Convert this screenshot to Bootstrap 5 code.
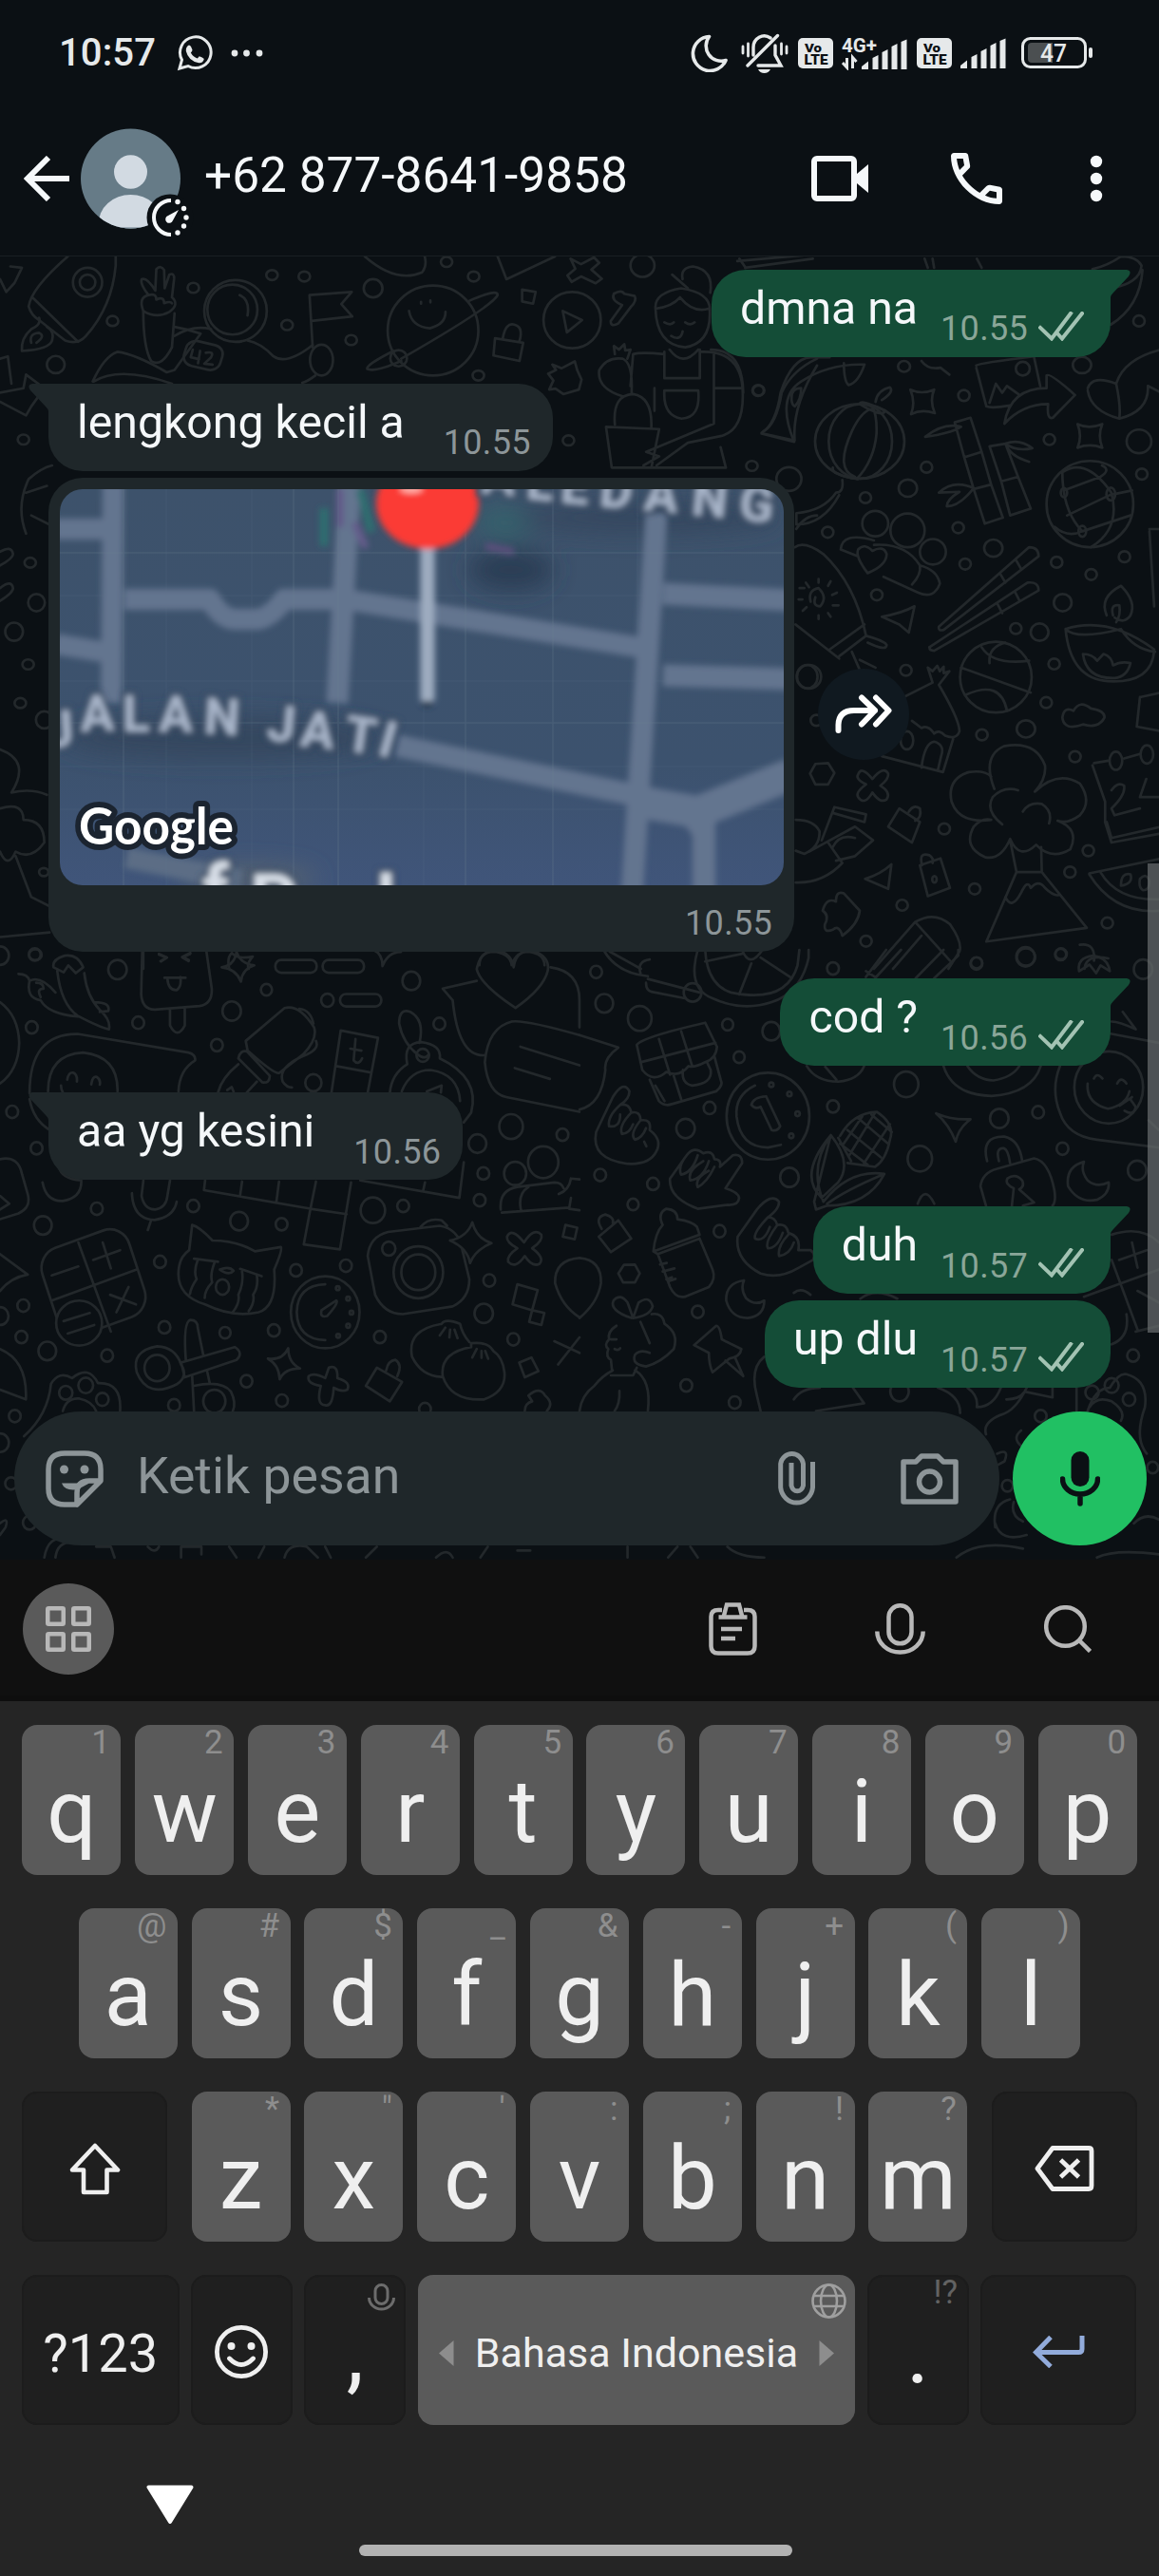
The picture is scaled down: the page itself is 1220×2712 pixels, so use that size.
<!DOCTYPE html>
<html lang="id">
<head>
<meta charset="utf-8">
<meta name="viewport" content="width=device-width, initial-scale=1">
<title>+62 877-8641-9858</title>
<link href="https://cdn.jsdelivr.net/npm/bootstrap@5.3.0/dist/css/bootstrap.min.css" rel="stylesheet">
<style>
  body { font-family: Roboto, "Noto Sans", sans-serif; background: #252525; color: #f5f8fa; }
  .phone { width: 1220px; height: 2712px; overflow: hidden; }
  svg { display: block; flex: none; }
  .topbars { background: #0b1014; }
  .statusbar { height: 112px; padding: 0 70px 0 62px; color: #e6e9ea; }
  .clock { font-size: 40px; font-weight: 500; line-height: 50px; letter-spacing: .1px; }
  .chathead { height: 158px; padding: 0 59px 6px 25px; border-bottom: 1px solid #191f23; }
  .peer { font-size: 51.4px; line-height: 60px; margin-left: 18px; padding-bottom: 5px; }
  .chatarea { height: 1372px; background: #0b1014; overflow: hidden; }
  .doodles { inset: 0; fill: none; stroke: #23282b; stroke-width: 2.7; stroke-linecap: round; stroke-linejoin: round; }
  .doodles path, .doodles circle, .doodles ellipse, .doodles rect { vector-effect: non-scaling-stroke; }
  .msgs { padding: 13.5px 51px 0; }
  .bubble { height: 92px; border-radius: 36px; padding-left: 30px; line-height: 82.500px; font-size: 48.2px; white-space: nowrap; }
  .bubble-out { background: #144d37; padding-right: 28px; }
  .bubble-in { background: #1f272a; padding-right: 23px; }
  .gap-l { margin-top: 28px; }
  .gap-m { margin-top: 28.5px; }
  .gap-s { margin-top: 7px; }
  .tail-out { border-top-right-radius: 0; }
  .tail-in { border-top-left-radius: 0; }
  .tail-out > .tail { left: 100%; top: 0; margin-left: -1px; fill: #144d37; }
  .tail-in > .tail { right: 100%; top: 0; margin-right: -1px; fill: #1f272a; }
  .stamp { font-size: 36px; line-height: 44px; margin-bottom: 7.5px; letter-spacing: .3px; color: #8d9699; }
  .bubble-out .stamp { color: #8aa698; margin-left: 24px; }
  .bubble-in .stamp { margin-left: 41px; }
  .ticks { margin: 0 0 17px 11px; }
  .mapcard { width: 785px; height: 499px; border-radius: 36px; background: #1f272a; padding: 12px 11px 0 12px; }
  .mapimg { height: 417px; border-radius: 24px; overflow: hidden; }
  .mapcard .stamp { margin: 18px 12px 0 0; }
  .fwd { width: 96px; height: 96px; margin-left: 25px; background: #101920; }
  .scroller { width: 12px; right: 0; top: 639px; height: 494px; background: rgba(105,109,111,.7); }
  .composer { padding: 0 13px 15px 15px; }
  .field { width: 1037px; height: 141px; border-radius: 71px; background: #1f272a; padding: 0 43px 0 33px; color: #8d9598; }
  .hint { font-size: 53.6px; line-height: 60px; padding-bottom: 5px; margin-left: 35px; }
  .sendmic { width: 141px; height: 141px; background: #21c063; margin-left: 14px; }
  .kbbar { height: 149px; background: #101010; padding: 2px 71px 0 24px; border-bottom: 6px solid #0e0e0e; }
  .kbapps { width: 96px; height: 96px; background: #5a5a5a; }
  .keyboard { background: #252525; padding: 25px 23px 0 23px; height: 921px; }
  .krow { height: 158px; margin-bottom: 35px; gap: 14.8px; }
  .key { position: relative; flex: none; width: 104px; height: 158px; border-radius: 16px; background: #5a5a5a; color: #efefef; font-size: 92px; line-height: 183px; text-align: center; white-space: nowrap; }
  .key .alt { position: absolute; top: 0; right: 11.5px; font-size: 35px; line-height: 38px; color: #8e8e8e; }
  .krow .faint { font-weight: 300; }
  .dim { background: #1f1f1f; box-shadow: inset 0 0 0 2px #1c1c1c; }
  .dim .alt { color: #626262; }
  .wide-mod { width: 153px; }
  .key-gap { gap: 14.8px; }
  .mod-row { gap: 12.4px; }
  .sym { width: 165.5px; font-size: 56px; line-height: 166px; }
  .slim { width: 107px; line-height: 163px; }
  .enterkey { width: 164.5px; }
  .space { width: 460.5px; font-size: 43px; line-height: 164px; }
  .navstrip { padding-left: 131px; margin-top: 63px; }
  .homebar { width: 456px; height: 11.5px; border-radius: 6px; background: #b2b2b2; margin: 21px 0 0 355px; }
</style>
</head>
<body>
<svg class="d-none" aria-hidden="true">
  <symbol id="tk" viewBox="0 0 48 31"><path d="M2 17 L14 28.500 L34 2 M20 23 L25 28.500 L46 2" fill="none" stroke="#a3c3b3" stroke-width="4" stroke-linecap="square"/></symbol>
  <symbol id="bars" viewBox="0 0 48 32"><path fill="#e6e9ea" d="M0 29 L7 23.500 V32 H0Z M11.500 20 L17.500 17 V32 H11.500Z M21.500 14 L27.500 11 V32 H21.500Z M31.500 8 L37.500 5 V32 H31.500Z M41.500 3 L47.500 .5 V32 H41.500Z"/></symbol>
</svg>

<main class="phone d-flex flex-column mx-auto">
  <header class="topbars">
    <div class="statusbar d-flex align-items-center">
      <span class="clock">10:57</span>
      <svg style="margin-left:22px" width="38" height="38" viewBox="0 0 38 38" fill="none" stroke="#e6e9ea" stroke-width="3"><path d="M3 35 L5.500 26 A16.300 16.300 0 1 1 12 32.500 Z"/><path d="M11 12 q2-3 4 0 l1.500 3.500 q0 1.500-1.700 3 q2.500 4.500 7 6 l2-2.300 q3.500 1 5 2.800 q-1 4.500-5.500 4.200 q-11-2-13.500-12.500 q-.3-3 1.200-4.700Z" fill="#e6e9ea" stroke="none"/></svg>
      <svg style="margin-left:18px" width="36" height="10" viewBox="0 0 36 10" fill="#e6e9ea"><circle cx="5" cy="5" r="3.400"/><circle cx="17.500" cy="5" r="3.400"/><circle cx="31" cy="5" r="3.400"/></svg>

      <svg class="ms-auto" width="39" height="40" viewBox="0 0 39 40" fill="none" stroke="#e6e9ea" stroke-width="3.600" stroke-linejoin="round"><path d="M19.500 2.500 A18 18 0 1 0 37 27.500 A16 16 0 0 1 19.500 2.500Z"/></svg>
      <svg style="margin-left:14px" width="50" height="42" viewBox="0 0 50 42" fill="none" stroke="#e6e9ea" stroke-width="3.400" stroke-linecap="round"><path d="M38.500 2.500 L7 34 M13 23 V15 A11.500 12 0 0 1 31 5 M36 13 V23 L42 34 H18"/><path d="M2 14 V21 M7.500 11 V24 M48 14 V21 M42.500 11 V22" stroke-width="2.800"/><path d="M18 38 H31 Q29 42 24.500 42 Q20 42 18 38Z" fill="#e6e9ea" stroke="none"/></svg>
      <svg style="margin-left:10px" width="37" height="32" viewBox="0 0 37 32"><rect width="37" height="32" rx="5" fill="#e6e9ea"/><text x="7" y="14.500" font-size="13.500" font-weight="900" fill="#0b1014" textLength="18" lengthAdjust="spacingAndGlyphs">Vo</text><text x="6.500" y="28" font-size="15" font-weight="900" fill="#0b1014" textLength="25" lengthAdjust="spacingAndGlyphs">LTE</text></svg>
      <svg style="margin-left:9px" width="69" height="36" viewBox="0 0 69 36"><text x="0" y="16.500" font-size="20" font-weight="700" fill="#e6e9ea" textLength="37" lengthAdjust="spacingAndGlyphs">4G+</text><path d="M1 28 L5.500 33 V23 M15.500 27 L11.500 22.500 V34" fill="none" stroke="#e6e9ea" stroke-width="3"/><svg x="21" y="3" width="48" height="32"><use href="#bars"/></svg></svg>
      <svg style="margin-left:10px" width="37" height="32" viewBox="0 0 37 32"><rect width="37" height="32" rx="5" fill="#e6e9ea"/><text x="7" y="14.500" font-size="13.500" font-weight="900" fill="#0b1014" textLength="18" lengthAdjust="spacingAndGlyphs">Vo</text><text x="6.500" y="28" font-size="15" font-weight="900" fill="#0b1014" textLength="25" lengthAdjust="spacingAndGlyphs">LTE</text></svg>
      <svg style="margin-left:9px" width="48" height="32"><use href="#bars"/></svg>
      <svg style="margin-left:16px" width="75" height="34" viewBox="0 0 75 34"><rect x="1.500" y="1.500" width="66" height="30" rx="8" fill="none" stroke="#e6e9ea" stroke-width="3"/><path d="M11 6 H33 V27 H11 Q7 27 7 23 V10 Q7 6 11 6Z" fill="#4b4f51"/><rect x="71" y="11" width="4" height="11" rx="2" fill="#e6e9ea"/><text x="20" y="25.500" font-size="26" font-weight="500" fill="#e6e9ea" textLength="28" lengthAdjust="spacingAndGlyphs">47</text></svg>
    </div>

    <div class="chathead d-flex align-items-center">
      <svg width="49" height="48" viewBox="0 0 49 48" fill="none" stroke="#f5f8fa" stroke-width="6"><path d="M48 24 H4 M26 2 L4 24 L26 46"/></svg>
      <svg style="margin:0 -7px 0 11px" width="119" height="122" viewBox="0 -3 119 122"><defs><clipPath id="av"><circle cx="52.500" cy="58" r="52.500"/></clipPath></defs><g clip-path="url(#av)"><rect width="106" height="120" fill="#667b87"/><ellipse cx="52.500" cy="51" rx="17.500" ry="17.800" fill="#d2dae2"/><ellipse cx="52.500" cy="106" rx="34" ry="31" fill="#d2dae2"/><path d="M0 109.500 H106 V120 H0Z" fill="#667b87"/></g><circle cx="94" cy="99" r="24.500" fill="#0b1014"/><path d="M95 81 A18 18 0 1 0 95 117" fill="none" stroke="#f5f8fa" stroke-width="4"/><path d="M103 91 L97 102 A4 4 0 1 1 92 97Z" fill="#f5f8fa"/><g fill="#f5f8fa"><circle cx="102" cy="82.500" r="2.700"/><circle cx="108.500" cy="89.500" r="2.700"/><circle cx="111" cy="99" r="2.700"/><circle cx="108.500" cy="108" r="2.700"/><circle cx="102" cy="115" r="2.700"/></g></svg>
      <span class="peer">+62 877-8641-9858</span>
      <svg class="ms-auto" width="61" height="48" viewBox="0 0 61 48"><rect x="3" y="3" width="42" height="42" rx="3" fill="none" stroke="#f5f8fa" stroke-width="6"/><path d="M48 19 L60 9 V39 L48 29Z" fill="#f5f8fa"/></svg>
      <svg style="margin-left:86px" width="54" height="54" viewBox="3 3 18 18" fill="#f5f8fa"><path d="M19.950 21q-3.125 0-6.175-1.363T8.225 15.775t-3.862-5.550T3 4.050q0-.45.3-.75t.75-.3H8.100q.35 0 .625.238t.325.562l.65 3.500q.05.4-.025.675T9.400 8.450L6.975 10.900q.5.925 1.187 1.787t1.513 1.663q.775.775 1.625 1.438T13.100 17l2.350-2.350q.225-.225.588-.338t.712-.062l3.450.7q.35.100.575.363T21 15.900v4.050q0 .45-.3.750t-.75.300ZM6.025 9l1.650-1.650L7.250 5H5.025q.125 1.025.35 2.025T6.025 9Zm8.950 8.950q.975.425 1.988.675T19 18.950v-2.200l-2.350-.475-1.675 1.675Z"/></svg>
      <svg style="margin-left:92px" width="14" height="50" viewBox="0 0 14 50" fill="#f5f8fa"><circle cx="7" cy="7" r="6.200"/><circle cx="7" cy="25" r="6.200"/><circle cx="7" cy="43" r="6.200"/></svg>
    </div>
  </header>

  <section class="chatarea position-relative d-flex flex-column">
    <svg class="doodles position-absolute" width="1220" height="1372" viewBox="0 270 1220 1372">
      <g transform="translate(0 270) scale(.5485 .4783)">
        <path d="M0 50 L12 78 L28 58 L42 25 L20 22 M130 0 Q60 70 55 110 Q60 130 75 140 L125 185 Q150 195 165 175 Q215 110 222 20 V0 M62 90 L150 188"/><ellipse cx="168" cy="57" rx="28" ry="32"/><ellipse cx="168" cy="57" rx="15" ry="17"/>
        <path d="M75 135 Q80 150 60 160 Q40 180 42 208 Q95 205 100 185 Q105 165 90 155 M60 190 Q55 170 75 168 Q88 175 70 190"/>
        <path d="M275 120 Q265 90 285 85 Q268 60 272 50 Q282 45 298 75 L300 28 Q308 18 315 30 L316 70 L325 40 Q335 35 334 50 L330 90 Q345 105 325 122 Q300 138 275 120 Q275 200 290 230 Q310 245 330 200 L335 125 M285 85 q15-5 15 10 q15-8 15 8 q12-5 15 0"/>
        <ellipse cx="452" cy="120" rx="60" ry="68"/><ellipse cx="446" cy="117" rx="48" ry="55"/><path d="M460 85 Q480 95 475 130 M335 155 Q360 160 385 170 L335 250 L320 255 Q260 215 225 210 Q200 220 178 275 M335 175 Q370 150 405 160 M475 185 Q500 190 525 220 Q550 240 600 195 M180 275 Q230 240 330 280"/>
        <rect x="-36" y="-28" width="72" height="56" rx="20" transform="translate(390 218) rotate(15)"/><path d="M370 205 L366 222 L382 226 M384 208 L380 235 M395 212 Q412 208 405 222 L392 236 L408 238"/>
        <path d="M600 200 L594 85 L675 78 L655 105 L676 132 L598 142"/><ellipse cx="617" cy="228" rx="22" ry="34"/><path d="M605 262 Q590 275 580 278"/>
        <ellipse cx="831" cy="163" rx="87" ry="99"/><path d="M900 98 Q955 70 955 85 Q945 110 770 225 M755 208 Q700 240 705 248 Q720 255 770 230 M785 120 Q790 155 825 158 Q855 150 855 122 M808 100 v4 M826 97 v4"/><ellipse cx="765" cy="224" rx="16" ry="18"/>
        <ellipse cx="1098" cy="140" rx="55" ry="62"/><path d="M1080 120 L1117 140 L1088 167Z M1002 73 l26 5 l-5 26 l-21 -5z M950 180 l54 10 l-7 40 l-50-12z M965 180 q5-35 22-30 q18 5 10 36 M1178 82 q15-10 20 0 l20 5 q5 10-8 25 l-23 35 q-15 10-15-5 l22-35 q-22-10-16-25"/>
        <path d="M700 0 Q760 60 810 35 Q820 20 815 0 M955 0 L972 50 L1065 0 M1095 5 l20 12 l25 -15 l10 12 l-15 15 l20 20 l-12 10 l-28-15 l-18 12 l-8-14 l15-15z M1415 10 L1565 -5 M1430 25 L1560 5 M1290 40 L1320 70"/>
        <path d="M1258 115 Q1255 80 1307 70 Q1365 80 1362 120 Q1365 190 1315 200 Q1260 195 1258 115 Q1290 110 1305 90 Q1330 125 1360 115 M1275 145 q12 8 18 0 M1315 145 q10 8 18 0 M1288 175 q18 12 22-10 M1285 205 Q1310 245 1340 205 M1275 210 V268 H1343 V205 M1275 215 Q1230 210 1215 215 L1210 285 M1343 210 Q1420 205 1425 290 H1370 M1256 290 V340 M1370 215 V368 L1240 430 L1265 440 L1235 460 M1425 290 Q1430 380 1385 395 L1320 410 L1260 460 M1175 465 H1393 L1383 420 M1275 295 H1340 Q1345 355 1308 357 Q1272 350 1275 295 M1163 375 L1265 380 L1250 465 H1174Z M1180 370 Q1175 305 1215 303 Q1252 310 1250 375 M1195 308 Q1145 290 1150 250 Q1165 220 1195 225 Q1215 235 1212 300 M1180 215 l-2-18 l10 8 l10-12 l2 14 l10-2 l-6 20"/><path d="M1310 50 Q1305 25 1330 22 Q1370 30 1363 80"/>
        <path d="M1060 238 l18 8 l25-15 l5 20 l8 20 l-5 22 l-30 10 l-15-12 l-12 2 l8-20 l-10-15 l15-8z M1465 385 Q1490 370 1500 300 Q1520 250 1568 225 M1465 390 L1525 405 Q1520 330 1568 240 M0 225 L15 220 L22 280 M0 300 L45 290 L50 260 L85 290 L60 330 L50 350 L0 320 M50 610 Q30 550 55 490 Q80 465 100 460 M50 520 L90 505 M60 570 L95 590"/>
        <path d="M0 650 q22-15 25 5 q0 10-25 25 M0 730 q22-20 25 0 q0 10-25 28 M0 1085 Q60 1110 22 1180 Q60 1170 90 1185 M0 1215 Q45 1200 45 1240 Q85 1240 85 1290 Q60 1330 30 1310 Q15 1350 0 1310 M30 1320 L60 1410 L95 1430 M1528 600 Q1545 570 1568 570"/>
        <ellipse cx="70" cy="762" rx="16" ry="19"/><ellipse cx="27" cy="826" rx="17" ry="20"/><ellipse cx="107" cy="238" rx="17" ry="19"/><ellipse cx="716" cy="70" rx="18" ry="20"/><ellipse cx="1233" cy="20" rx="23" ry="25"/><ellipse cx="85" cy="1020" rx="16" ry="19"/><ellipse cx="1549" cy="925" rx="20" ry="26"/><ellipse cx="1514" cy="490" rx="24" ry="26"/>
        <circle cx="522" cy="41" r="11"/><circle cx="584" cy="44" r="11"/><circle cx="371" cy="69" r="11"/><circle cx="551" cy="151" r="11"/><circle cx="674" cy="184" r="11"/><circle cx="216" cy="142" r="11"/><circle cx="909" cy="44" r="11"/><circle cx="857" cy="12" r="11"/><circle cx="918" cy="262" r="11"/><circle cx="1456" cy="295" r="11"/><circle cx="1091" cy="405" r="11"/><circle cx="1443" cy="461" r="11"/><circle cx="45" cy="403" r="11"/><circle cx="58" cy="674" r="11"/><circle cx="54" cy="898" r="11"/><circle cx="39" cy="983" r="11"/><circle cx="84" cy="1355" r="9"/><circle cx="68" cy="1537" r="12"/>
        <path d="M0 1498 L95 1488 M275 1525 V1568 M305 1535 l15 8 l-12 8 M365 1535 l-15 8 l12 8 M440 1568 q-5-25 5-35 q10 15 40 8 q-12 15-8 27 M1170 1530 L1230 1568 M920 1560 Q920 1530 950 1530 Q980 1535 982 1560 Q990 1530 1015 1530 Q1045 1535 1045 1560"/>
      </g>
      <g transform="translate(700 270) scale(.3333 .4783)">
        <path d="M145 205 Q245 205 247 300 M305 388 Q350 370 365 300 Q400 225 460 222 H520 M305 390 L408 408 Q350 310 430 275 Q520 235 630 238 M400 310 Q400 290 430 290 Q430 315 410 330 Q398 325 400 310 M565 235 q0 40 15 48 q30-5 50-45"/>
        <ellipse cx="615" cy="407" rx="141" ry="82"/><ellipse cx="617" cy="407" rx="100" ry="82"/><path d="M600 485 Q535 470 590 385 Q620 340 655 335 M605 490 Q660 450 668 390 Q670 350 655 330 M615 325 q0-12 80 15 q-10 15-80-15 M530 465 q-5 15 80 25 M665 320 q5-25 45-32 q15 10-25 28 M560 492 Q565 520 540 520 Q500 560 415 565 V590 Q500 590 550 525"/>
        <path d="M775 293 q35 12 75 0 q-15 25 2 52 q-40-10-75 2 q15-25-2-54z M1303 369 q35 12 78 0 q-15 25 0 52 q-40-10-78 0 q15-25 0-52z M983 240 Q990 235 1165 220 L1185 285 M983 245 L1015 330 Q1030 335 1090 328 M1025 322 L1045 280 L1065 300 L1080 285 L1120 305 M1072 368 Q1090 290 1205 290 V262 Q1215 255 1295 305 L1225 355 Q1205 360 1210 325 Q1130 325 1072 368 M810 230 Q830 250 870 245 L898 260 M1335 290 Q1350 260 1425 280 Q1450 225 1568 205 M1335 295 Q1345 340 1435 357 Q1530 340 1525 285 L1568 300 M1425 280 Q1440 330 1435 355"/>
        <path d="M822 397 Q880 365 935 375 Q900 390 822 397 M915 365 L965 355 L1000 430 L945 442Z M945 442 L975 512 L1030 502 L1000 430 M975 512 L1010 588 L1067 575 L1030 502 M865 520 Q910 490 975 510 Q930 550 890 550 Q890 535 930 518Z M1025 418 L1075 412 L1115 485 L1062 495Z M1062 495 L1090 570 L1155 555 L1115 485 M1075 412 Q1120 400 1160 422 Q1110 430 1075 412 Q1090 440 1150 452"/>
        <ellipse cx="1342" cy="545" rx="137" ry="95"/><path d="M1255 475 Q1330 440 1410 520 Q1440 600 1345 640 M1260 515 L1375 485 Q1410 470 1380 460 M1255 475 Q1255 560 1318 605 L1470 570 M1270 570 L1405 525 L1475 515 M1318 605 Q1270 620 1230 595"/><circle cx="1260" cy="520" r="10"/><circle cx="1408" cy="523" r="14"/><circle cx="1318" cy="605" r="12"/>
        <ellipse cx="664" cy="588" rx="41" ry="28"/><ellipse cx="766" cy="603" rx="54" ry="37"/><ellipse cx="846" cy="650" rx="41" ry="28"/><path d="M555 645 Q560 605 660 625 M555 645 L610 660 M660 635 Q760 630 805 680 Q860 690 868 720 Q850 755 800 740 L690 705 M805 680 Q810 700 780 722 M640 697 Q600 660 610 645 Q630 630 655 648 Q690 635 700 655 Q700 680 640 697"/>
        <path d="M410 640 Q440 625 500 655 Q600 720 635 835 L550 880 M412 810 L550 885 M520 865 L630 810 M635 835 Q690 845 700 855 Q700 870 640 850 M590 870 L615 910 M615 888 L665 905"/><path d="M460 760 Q450 735 485 730 Q515 750 490 770 Q465 770 475 750 M485 710 v8 M445 718 l10 10 M425 730 h15 M422 755 h12 M435 780 l12-8 M485 790 v8 M515 785 l8 8 M530 768 h18 M528 745 l15-5 M515 725 l8-10"/>
        <path d="M685 793 Q750 785 788 770 L770 828 L740 810Z M865 815 L1150 640 Q1180 640 1180 660 L880 822 Q862 825 865 815 M1060 700 l15 18 M1110 670 l15 18 M835 860 L1145 718 Q1180 715 1180 735 L850 868 Q835 868 835 860 M1050 765 l15 20 M1105 738 l15 20"/>
        <ellipse cx="1045" cy="926" rx="113" ry="78"/><path d="M935 905 L1155 960 M1000 860 Q1035 900 1150 890 M1075 850 Q1020 860 1025 895 M950 965 Q1060 930 1080 1000"/>
        <path d="M1265 820 Q1400 790 1545 865 Q1540 940 1400 935 Q1280 930 1265 820 Q1300 845 1440 820 Q1480 865 1548 870 M1320 875 Q1350 875 1365 890 L1385 875 Q1410 880 1415 900 Q1440 890 1470 895 Q1460 925 1420 928 Q1330 930 1320 875 M1395 790 Q1370 750 1440 725 Q1490 760 1470 790 Q1450 810 1420 795 M1415 790 Q1405 765 1435 768 Q1440 790 1425 805"/>
        <path d="M725 980 L845 938 L830 905 l15 8 l15-12 l8 12 l12-10 l0 14 l18-4 l-33 30 Q930 1020 930 1045 Q920 1065 885 1055 Q865 1040 850 1050 Q830 1030 810 1038 L780 1022 M712 1020 L690 1085 L685 1100 L878 1135 L910 1062 M810 1125 Q820 1070 850 1068 Q885 1075 872 1100 L862 1130"/><circle cx="764" cy="1065" r="20"/>
        <path d="M1255 1015 Q1260 990 1290 1000 Q1310 975 1345 995 Q1390 1000 1388 1015 Q1370 1040 1320 1030 Q1260 1045 1255 1015 M1500 970 L1568 960 M1500 970 L1490 1035 L1568 1045 M1530 600 H1568 M1530 605 L1545 770"/>
        <path d="M458 1138 L475 1117 L515 1115 L535 1137 L515 1162 L475 1162Z M610 1140 Q620 1120 655 1150 Q690 1120 705 1138 Q708 1150 680 1165 Q715 1180 700 1195 Q680 1205 655 1180 Q630 1210 610 1190 Q600 1180 635 1162 Q600 1150 610 1140"/>
        <path d="M1040 1172 Q1000 1100 1070 1078 Q1170 1065 1200 1120 Q1205 1150 1168 1178 Q1240 1130 1310 1160 Q1350 1200 1310 1230 Q1270 1250 1240 1242 Q1310 1260 1280 1305 Q1220 1330 1172 1295 Q1120 1330 1090 1282 Q1060 1330 1010 1322 Q940 1300 975 1255 Q1000 1235 1030 1240 Q930 1250 905 1200 Q890 1150 960 1135 Q1010 1130 1030 1145 M1065 1250 Q1010 1220 1035 1190 Q1070 1165 1115 1175 M1130 1222 Q1150 1200 1190 1205 Q1225 1220 1213 1248 M1090 1285 L1110 1355 H1190 L1188 1300 M1110 1355 L1015 1508 L1332 1478 L1190 1355 M1075 1410 Q1095 1440 1125 1400 Q1145 1370 1155 1390 Q1180 1370 1200 1390 Q1230 1410 1245 1405"/>
        <path d="M1355 1115 L1400 1110 M1450 1105 L1500 1095 M1350 1120 L1390 1200 V1245 L1410 1290 L1568 1270 M1395 1245 L1410 1280 L1568 1255 M1410 1175 Q1430 1155 1450 1165 Q1455 1185 1410 1215 L1420 1230 L1500 1215 M1520 1150 L1500 1190 H1568"/><circle cx="1424" cy="1110" r="20"/><circle cx="1522" cy="1096" r="20"/>
        <path d="M705 1255 L740 1215 L805 1245 L780 1290Z M770 1222 Q785 1205 805 1215 Q812 1235 790 1242 M805 1340 L870 1325 L900 1390 L830 1408Z M812 1340 Q800 1310 835 1318 Q850 1325 845 1335 M632 1370 Q680 1360 715 1338 L705 1392Z M498 1440 Q510 1410 540 1420 Q540 1395 565 1402 L615 1440 Q610 1470 560 1495 Q550 1470 530 1482 Q500 1490 505 1470 Q520 1450 498 1440"/><circle cx="851" cy="1371" r="7"/>
        <path d="M495 1285 L535 1212 L635 1228 L630 1245 L530 1225 M413 1240 Q470 1240 488 1265 Q490 1300 440 1315 L413 1308 M455 1310 L600 1255 L657 1285 L600 1320 L540 1330 M530 1300 Q550 1270 600 1280 M413 1378 Q500 1380 560 1335 L515 1290 M1340 1358 L1568 1325 M1340 1360 Q1420 1450 1568 1440 M1375 1355 Q1430 1420 1568 1415 M1440 1385 Q1440 1355 1470 1360 Q1480 1380 1440 1385 M1500 1370 q20-15 30 5 q0 20-20 20 q-15-5-10-25 M660 1568 L790 1465 Q850 1440 900 1470 Q940 1510 930 1530 L895 1568 M790 1465 L900 1550 M720 1568 L810 1495 M1310 1515 Q1360 1510 1355 1550 M1325 1568 Q1330 1535 1400 1545"/>
        <ellipse cx="767" cy="510" rx="29" ry="19"/><ellipse cx="1037" cy="642" rx="29" ry="19"/><ellipse cx="1256" cy="762" rx="28" ry="19"/><ellipse cx="1183" cy="827" rx="28" ry="19"/><ellipse cx="1317" cy="239" rx="29" ry="18"/><ellipse cx="1497" cy="407" rx="39" ry="26"/><ellipse cx="1140" cy="1040" rx="29" ry="19"/><ellipse cx="1140" cy="1542" rx="29" ry="19"/><ellipse cx="1130" cy="247" rx="22" ry="15"/><ellipse cx="455" cy="925" rx="38" ry="26"/>
        <g><ellipse cx="755" cy="242" rx="19" ry="12"/><ellipse cx="944" cy="306" rx="18" ry="12"/><ellipse cx="826" cy="464" rx="18" ry="12"/><ellipse cx="633" cy="531" rx="18" ry="12"/><ellipse cx="514" cy="607" rx="18" ry="12"/><ellipse cx="926" cy="597" rx="18" ry="12"/><ellipse cx="948" cy="677" rx="18" ry="12"/><ellipse cx="669" cy="745" rx="18" ry="12"/><ellipse cx="1237" cy="673" rx="18" ry="12"/><ellipse cx="1451" cy="661" rx="18" ry="12"/><ellipse cx="1346" cy="700" rx="18" ry="12"/><ellipse cx="1506" cy="479" rx="18" ry="12"/><ellipse cx="1214" cy="403" rx="18" ry="12"/><ellipse cx="1108" cy="819" rx="18" ry="12"/><ellipse cx="761" cy="911" rx="18" ry="12"/><ellipse cx="1229" cy="897" rx="18" ry="12"/><ellipse cx="1204" cy="982" rx="18" ry="12"/><ellipse cx="1001" cy="1053" rx="18" ry="12"/><ellipse cx="1295" cy="1101" rx="18" ry="12"/><ellipse cx="882" cy="1260" rx="18" ry="12"/><ellipse cx="1337" cy="1308" rx="18" ry="12"/><ellipse cx="1279" cy="1355" rx="18" ry="12"/><ellipse cx="978" cy="1392" rx="18" ry="12"/><ellipse cx="749" cy="1428" rx="18" ry="12"/><ellipse cx="635" cy="1507" rx="18" ry="12"/><ellipse cx="1397" cy="1467" rx="18" ry="12"/><ellipse cx="1251" cy="1535" rx="18" ry="12"/><ellipse cx="984" cy="1555" rx="18" ry="12"/><ellipse cx="1497" cy="142" rx="18" ry="12"/><ellipse cx="478" cy="1021" rx="18" ry="12"/><ellipse cx="294" cy="295" rx="18" ry="12"/></g>
        <path d="M820 5 L830 25 M845 5 L850 25 M985 5 L1000 25 M235 5 L255 25 M1405 70 Q1500 60 1505 20 Q1490 0 1440 0 Q1400 20 1350 28 M1408 150 Q1500 110 1508 30"/>
      </g>
      <g transform="translate(0 1000) scale(.389 .408)">
        <path d="M145 45 Q140 25 175 15 Q210 10 225 45 L205 60 L185 40 L172 58Z M155 55 Q165 140 210 170 Q270 200 295 205 Q300 180 270 155 Q235 120 228 60 M255 135 Q300 135 293 158 L270 160 M50 62 Q75 62 80 80 M80 80 Q70 125 110 130 Q130 165 210 172 M80 80 Q110 65 150 110 M98 85 q20 0 20 15 q-20 0-8 22"/>
        <path d="M385 0 L382 115 Q385 155 420 154 L540 145 Q575 140 573 100 L558 0 M460 152 V195 Q480 232 500 195 V150 M445 72 H502 M453 74 Q455 105 478 104 Q492 95 488 70 M430 12 l22 8 l-16 10 M515 8 l-22 10 l18 8"/>
        <path d="M600 45 Q635 40 640 5 Q650 35 688 40 Q655 50 652 82 Q640 50 600 45 M1010 0 Q1035 10 1035 42 Q1050 5 1085 5"/>
        <rect x="745" y="26" width="112" height="33" rx="16"/><rect x="873" y="26" width="112" height="33" rx="16"/><rect x="920" y="114" width="112" height="32" rx="16"/>
        <path d="M1395 150 Q1300 90 1290 50 Q1300 0 1345 0 Q1385 10 1390 45 Q1395 5 1435 0 Q1490 15 1482 55 Q1470 100 1395 150 M1290 80 L1198 100 L1225 130 Q1240 275 1310 272 M1490 45 Q1568 55 1568 130 V200"/><path d="M1385 185 Q1420 180 1568 220 M1385 185 Q1320 200 1312 290 Q1320 370 1370 380 L1568 418 M1408 250 L1568 298 M1393 305 L1488 333"/>
        <path d="M0 135 Q50 170 52 240 Q50 310 0 345 M80 370 Q80 215 210 217 L510 265 Q530 270 528 285 Q485 310 483 365 M80 385 Q90 440 135 465 M130 365 Q130 270 225 265 Q320 275 318 365 M182 335 Q185 315 198 317 Q210 322 208 340 M247 347 Q250 325 262 328 Q273 335 270 348 M165 350 q0 10 5 18"/>
        <path d="M665 235 L770 150 Q810 140 850 200 Q860 230 820 270 L755 318 Q740 320 670 260Z M810 152 Q840 155 848 190 M645 280 Q650 258 668 262 L730 325 Q730 345 710 342Z M645 295 Q600 330 590 368 M695 340 L668 368 M855 235 Q865 255 830 270 Q750 300 765 340 Q775 355 790 355 M615 362 l12-8 l5 12"/>
        <path d="M922 208 L1023 227 L995 368 M922 208 L897 368 M910 300 L1000 316 M962 230 L957 285 Q970 300 980 280 M948 255 L978 260"/>
        <path d="M1055 368 Q1060 320 1102 295 Q1090 240 1140 238 Q1195 245 1190 280 Q1300 330 1275 420 L1255 445 M1087 365 Q1110 310 1165 310 Q1240 320 1245 390 M1155 365 L1195 350 L1193 368 M1135 240 Q1150 180 1110 160 Q1080 150 1080 190 Q1090 240 1130 270 Q1150 285 1160 270"/><circle cx="1144" cy="272" r="17"/>
        <path d="M0 540 Q50 530 60 580 L75 630 Q85 665 50 680 L0 695 M0 635 L25 655 L0 670 M160 560 Q165 590 220 595 M115 600 Q125 650 170 648 Q220 640 220 598 M388 595 L383 635 Q390 670 420 670 Q450 665 453 635 L460 595 M357 628 Q360 695 418 697 Q470 690 478 650 M408 700 L400 723"/>
        <path d="M555 595 L552 620 L840 668 L822 760 L920 773 L950 600 M655 598 L650 632 M755 598 L748 650 M855 598 L840 668 L938 682 M975 595 L1243 640 L1255 548 M1150 600 L1145 622"/>
        <rect x="-124" y="-118" width="248" height="236" rx="55" transform="translate(253 858) rotate(-19)"/><path d="M212 755 L300 985 M140 905 L370 825 M140 840 L212 817 M252 800 L325 775 M278 755 L300 822 M298 890 L368 915 M348 870 L315 935"/><ellipse cx="214" cy="963" rx="62" ry="58" fill="#0b1014"/><path d="M172 958 L243 937 M183 990 L255 968"/>
        <path d="M520 710 Q540 715 575 750 Q640 750 690 778 L760 767 Q765 775 742 825 Q750 920 700 935 Q630 950 555 915 Q470 890 485 815 Q490 790 512 775Z M525 797 L590 805 M650 823 L708 842 M535 800 q-12 30-3 50 q-15 20-18 38 M580 808 q-12 30-6 50 q-20 20-20 40 M655 830 q5 30-10 60 q5 20-15 45 M695 840 q5 30-10 50 q5 20-12 42 M595 825 Q620 815 632 828 Q620 842 595 825"/><ellipse cx="602" cy="870" rx="18" ry="20"/>
        <circle cx="880" cy="935" r="93"/><path d="M880 863 Q805 865 803 935 Q805 1005 880 1007 M870 930 L910 905 Q918 910 885 945 Q865 950 870 930"/><circle cx="914" cy="873" r="5"/><circle cx="942" cy="900" r="5"/><circle cx="951" cy="936" r="5"/><circle cx="942" cy="970" r="5"/><circle cx="915" cy="996" r="5"/>
        <path d="M1050 728 L1190 712 Q1240 720 1250 770 L1270 850 Q1270 900 1225 920 L1090 940 Q1040 940 1015 890 L995 790 Q1000 740 1050 728 M1138 715 Q1160 690 1195 698 L1210 712"/><circle cx="1132" cy="832" r="67"/><circle cx="1132" cy="832" r="46"/><circle cx="1052" cy="771" r="18"/><path fill="#0b1014" d="M1218 750 Q1265 740 1278 703 Q1290 745 1330 757 Q1285 775 1272 808 Q1265 770 1218 750"/>
        <path d="M1372 740 Q1385 715 1418 755 Q1445 715 1465 735 Q1470 750 1440 770 Q1475 795 1460 810 Q1440 820 1420 790 Q1395 825 1375 805 Q1370 790 1400 770 Q1370 755 1372 740 M1400 863 L1455 878 L1440 930 L1387 915Z M1440 930 L1473 937 L1465 968 L1432 960Z M1530 710 L1562 717 L1555 747 L1523 740Z M1568 795 Q1500 800 1502 860 Q1520 920 1568 948"/>
        <path d="M503 1060 Q495 960 515 955 Q535 955 535 975 L550 1045 M490 1065 L635 1025 Q660 1040 640 1058 L500 1103Z M520 1100 L525 1190 M560 1085 L568 1120 M525 1125 Q600 1110 625 1140 Q640 1170 630 1190 M370 1090 Q355 1035 425 1023 Q475 1025 490 1070 Q510 1100 480 1120 Q400 1160 370 1090"/><circle cx="425" cy="1079" r="34"/><circle cx="580" cy="1165" r="30"/>
        <path d="M725 1055 Q765 1060 780 1028 Q780 1065 812 1080 Q770 1080 757 1108 Q755 1070 725 1055 M890 1078 Q915 1070 913 1105 Q950 1115 940 1135 Q925 1142 903 1130 Q900 1180 880 1175 Q855 1175 868 1125 Q830 1120 835 1100 Q850 1090 880 1105Z M990 1125 L1020 1078 L1088 1115 L1055 1165Z M1045 1085 Q1050 1060 1070 1058 Q1090 1070 1075 1100"/>
        <path d="M1195 965 Q1100 980 1115 1050 Q1140 1100 1195 1102 M1195 965 Q1205 950 1245 965 Q1250 990 1270 1012 M1275 1025 Q1190 1040 1198 1100 Q1220 1165 1310 1160 Q1370 1140 1365 1090 Q1360 1050 1335 1035 Q1320 1010 1275 1015Z M1205 975 l-15 20 M1218 980 l-2 20 M1230 980 l8 22 M1290 1030 l-12 22 M1303 1035 l0 18 M1313 1035 l8 20 M1405 1065 L1438 1052 L1457 1087 L1420 1103Z M1420 1190 Q1420 1170 1440 1165 L1430 1150 Q1460 1125 1475 1150 Q1500 1170 1480 1190 M1500 1010 L1568 1040 M1510 1070 L1568 1000"/>
        <path d="M0 785 L75 838 Q30 845 0 880 M0 1030 Q75 1060 70 1160 L0 1135 M65 1255 Q130 1200 138 1120 Q160 1085 195 1105 Q240 1070 265 1118 Q330 1115 325 1190 M170 1190 Q180 1155 215 1158 Q250 1165 260 1190"/><circle cx="178" cy="1143" r="18"/><circle cx="232" cy="1124" r="20"/><circle cx="277" cy="1160" r="17"/>
        <circle cx="318" cy="51" r="25"/><circle cx="627" cy="158" r="25"/><circle cx="848" cy="343" r="22"/><circle cx="1113" cy="80" r="24"/><circle cx="116" cy="711" r="24"/><circle cx="128" cy="1035" r="24"/><circle cx="647" cy="700" r="24"/><circle cx="1009" cy="672" r="33"/><circle cx="1383" cy="456" r="32"/><circle cx="1292" cy="500" r="24"/><circle cx="1309" cy="938" r="25"/><circle cx="1394" cy="577" r="30"/><circle cx="1470" cy="548" r="41"/><circle cx="0" cy="1272" r="24"/><circle cx="0" cy="945" r="23"/><circle cx="0" cy="15" r="24"/>
        <path d="M1355 670 Q1350 620 1400 612 L1500 600 Q1520 600 1525 615 M1410 672 Q1400 630 1430 612 M1358 678 L1540 665 M1512 630 Q1540 620 1545 590 L1568 592 M1545 640 L1540 668 L1568 672"/>
        <g><circle cx="94" cy="12" r="16"/><circle cx="86" cy="200" r="16"/><circle cx="374" cy="188" r="16"/><circle cx="721" cy="103" r="15"/><circle cx="587" cy="246" r="16"/><circle cx="886" cy="130" r="17"/><circle cx="1189" cy="191" r="16"/><circle cx="33" cy="418" r="16"/><circle cx="99" cy="512" r="16"/><circle cx="262" cy="668" r="16"/><circle cx="523" cy="661" r="16"/><circle cx="762" cy="708" r="16"/><circle cx="433" cy="805" r="16"/><circle cx="801" cy="827" r="16"/><circle cx="936" cy="815" r="16"/><circle cx="1091" cy="661" r="16"/><circle cx="1308" cy="577" r="16"/><circle cx="1298" cy="646" r="16"/><circle cx="1522" cy="477" r="16"/><circle cx="1324" cy="853" r="16"/><circle cx="63" cy="918" r="16"/><circle cx="58" cy="999" r="16"/><circle cx="290" cy="1047" r="16"/><circle cx="445" cy="974" r="16"/><circle cx="609" cy="988" r="15"/><circle cx="741" cy="982" r="16"/><circle cx="667" cy="1113" r="16"/><circle cx="763" cy="1163" r="16"/><circle cx="471" cy="1175" r="16"/><circle cx="1028" cy="999" r="16"/><circle cx="1389" cy="1005" r="16"/><circle cx="40" cy="1203" r="16"/><circle cx="1150" cy="1185" r="16"/><circle cx="30" cy="1377" r="16"/><circle cx="80" cy="1478" r="18"/></g>
        <path d="M0 1480 Q25 1460 15 1490 L0 1510 M120 1568 Q130 1510 180 1520 M150 1568 q5-40 45-40 M260 1540 L300 1540 L310 1568 M400 1540 Q420 1560 430 1540 M490 1568 V1540 H545 V1560 M620 1540 L640 1568 M700 1568 L715 1540 M770 1568 Q780 1530 830 1540 L860 1568 M880 1540 L895 1568 M990 1568 L1020 1540 M1180 1568 Q1210 1540 1225 1568 M1320 1540 L1300 1568 M1400 1550 H1435"/>
      </g>
      <g transform="translate(610 1000) scale(.389 .408)">
        <path d="M65 0 Q100 60 185 68 M165 60 Q155 30 190 25 M185 75 L325 110 M180 85 Q180 105 195 108 L285 125 M320 0 Q290 100 360 125 Q440 160 520 135 Q600 110 620 20 V0 M340 0 Q345 90 410 110 Q560 140 590 40 L595 0 M465 35 L432 115 M490 20 L570 70 M340 30 L440 10 M440 0 Q460 50 495 0 M775 70 L830 0 M800 73 L870 0 M910 73 L985 0 M775 55 L800 70 M960 73 L1025 15 V0"/><circle cx="306" cy="110" r="24"/>
        <path d="M155 245 Q170 225 340 188 L372 250 Q370 280 340 290 Q310 305 295 300 Q270 330 235 315 Q200 345 170 310Z M215 230 L245 322 M275 210 L305 300 M165 290 L368 240 M190 335 L215 390 Q230 405 250 398 L370 365 Q390 350 382 335 L365 275 M205 350 L230 390 M255 325 L275 385 M280 310 Q275 345 305 350 Q360 345 355 310 L345 290"/>
        <path d="M0 220 L105 252 Q65 280 70 310 Q60 400 0 412 M1470 160 L1505 205 Q1460 185 1440 185"/>
        <circle cx="510" cy="429" r="112"/><path d="M475 350 Q420 375 425 430 Q435 510 510 510 L545 503 M465 400 Q470 380 505 378 L543 455 Q535 470 520 465 L490 405 Q475 412 465 400"/><circle cx="519" cy="348" r="6"/><circle cx="568" cy="372" r="6"/><circle cx="590" cy="423" r="6"/><circle cx="573" cy="480" r="6"/>
        <path d="M90 380 Q120 335 135 365 Q135 385 110 400 Q135 395 140 420 Q165 415 165 440 Q195 435 190 465 Q225 490 208 520 Q190 555 130 552 Q30 540 45 470Z M110 400 Q75 430 80 455 Q110 460 110 425 M140 420 Q105 455 115 475 Q135 475 145 450 M165 440 Q135 475 150 490 Q170 485 180 460 M175 495 l6 12"/>
        <path d="M290 530 Q310 505 335 525 Q360 515 365 540 Q385 540 380 560 L415 530 Q440 525 440 550 L395 615 Q430 625 432 640 Q430 660 400 658 L320 668 Q240 640 245 590Z M290 530 Q265 560 275 580 Q305 575 320 530 M335 545 Q290 570 300 595 Q335 590 350 545 M350 570 Q310 590 320 612 Q345 600 365 560"/>
        <path d="M480 670 Q520 625 540 650 Q540 670 510 690 Q530 690 535 710 Q560 705 565 730 Q600 740 592 775 L625 775 Q640 785 632 800 L590 822 Q540 850 490 835 Q420 800 428 740Z M510 690 Q470 730 475 745 Q500 755 515 715 M535 710 Q500 755 510 770 Q535 770 550 730 M565 735 Q535 765 540 790 Q570 785 580 755"/>
        <path d="M655 640 Q590 580 680 478 Q740 550 700 600Z M680 478 Q620 560 660 650 Q730 565 825 578 Q780 660 670 660 L640 670 L635 650Z M820 580 Q720 620 670 655 M705 480 Q740 420 805 418 Q855 450 840 490 Q830 540 800 560 L725 550 M705 500 L780 555 M725 465 L815 535 M755 435 L835 500 M790 425 L845 470 M730 530 L800 420 M715 500 L765 430 M770 550 L840 450 M700 485 L735 545"/>
        <path d="M965 422 Q1010 440 1058 437 Q1025 460 1018 495 Q1000 450 965 422 M1103 545 Q1085 480 1150 482 Q1190 490 1198 545 M1135 545 Q1125 510 1148 512 Q1160 515 1165 550 M1100 660 L1085 610 Q1090 575 1130 565 L1230 538 Q1270 545 1285 620 Q1290 650 1280 660 M1170 660 L1175 615 Q1150 605 1158 590 Q1180 575 1198 595 Q1205 610 1190 618 L1230 652 L1200 660"/>
        <path d="M1365 547 Q1315 560 1322 610 Q1350 655 1400 645 Q1435 630 1432 600 Q1400 615 1375 595 Q1355 570 1365 547 M445 853 Q395 860 397 905 Q410 950 455 950 Q500 945 500 905 Q475 920 450 898 Q435 875 445 853"/>
        <path d="M1300 300 Q1275 360 1300 420 Q1320 480 1400 490 L1568 510"/><circle cx="1432" cy="355" r="93"/><path d="M1375 345 Q1370 395 1430 410 Q1480 400 1488 365 M1392 332 Q1400 315 1415 332 M1455 345 Q1465 325 1480 345 M1462 402 L1495 380 M1475 415 Q1500 430 1505 405 L1490 385 M1540 440 L1568 465 M1430 215 L1568 240"/>
        <path d="M615 300 Q640 340 700 340 Q755 335 770 300 M665 302 L695 335 M985 300 Q1010 375 1115 377 Q1225 370 1248 300 M1050 300 Q1075 335 1120 337 Q1170 330 1190 300"/>
        <path d="M52 740 L105 698 L140 745 L85 780Z M60 720 Q40 690 70 683 Q95 690 90 705 M0 795 Q60 800 58 860 Q50 910 0 950 M105 835 L120 813 L150 812 L163 835 L150 858 L118 858Z M225 710 Q210 680 235 668 Q265 670 265 695 Q305 700 318 715 L325 735 L200 778 Q205 730 225 710 M200 778 L212 785 L325 745 M212 785 L245 870 Q260 900 285 895 L350 870 Q370 850 360 825 L325 745 M218 812 l18-4 M225 830 l32-8 M235 850 l15-5 M240 855 l20-6"/>
        <path d="M140 950 Q80 930 92 905 Q110 885 130 910 L145 950 L160 910 Q190 890 198 920 Q190 945 145 950 M100 970 Q75 985 80 1005 Q65 1020 78 1030 Q70 1050 85 1058 L88 1085 M195 940 Q225 935 230 965 Q270 990 255 1030 Q220 1065 180 1075 Q140 1070 150 1045 Q165 1030 190 1040 M165 960 L190 1015 M90 1085 Q60 1100 40 1125 Q5 1150 0 1190 M85 1098 H145 L155 1078 M150 1085 Q195 1110 185 1190 M108 1138 Q110 1170 95 1190 M85 1005 h15 M95 1030 q10 5 15-2"/>
        <path d="M310 1020 L370 970 Q380 970 385 1005 L438 1030 Q435 1050 405 1055 L360 1090 Q350 1070 350 1040Z M395 1060 L443 1100 L420 1050 M500 1050 Q460 1080 480 1150 L490 1190 M740 1130 L770 1170 L640 1190 M580 1160 q20-30 70-30 M970 1130 Q1030 1150 1030 1195 M1050 1130 Q1080 1150 1075 1180 Q1120 1180 1140 1130 M1155 1160 Q1190 1160 1205 1140 L1280 1155 V1130 M1210 1130 Q1180 1190 1140 1200 Q1090 1220 1100 1250 M1345 1130 V1190"/>
        <path d="M1440 735 Q1520 710 1568 755 M1440 800 L1510 980 M1365 895 L1568 825 M1495 755 L1510 820 M1460 800 L1535 775 M1510 880 L1568 910 M1480 940 Q1490 1000 1440 1018 M1505 985 L1568 970"/>
        <path d="M1375 1190 Q1395 1130 1435 1130 Q1460 1090 1480 1095 Q1540 1110 1530 1180 Q1500 1260 1535 1300 M1380 1180 Q1400 1150 1440 1165 Q1480 1190 1465 1215"/><circle cx="1387" cy="1142" r="18"/><circle cx="1440" cy="1124" r="19"/><circle cx="1487" cy="1160" r="17"/>
        <path d="M1352 55 Q1345 20 1390 15 Q1430 20 1435 55 L1410 40 L1398 60 L1380 38Z M580 885 Q600 870 625 890 M760 900 Q800 870 860 900"/>
        <path d="M1195 1240 Q1170 1260 1195 1280 M1130 1300 Q1165 1285 1150 1320 L1130 1330 M1125 1490 Q1115 1430 1165 1418 M1175 1425 Q1165 1460 1200 1475 M1125 1480 Q1140 1530 1210 1510 M1020 1568 Q1080 1520 1200 1545 M1500 1480 Q1530 1450 1568 1470 M1400 1568 Q1450 1545 1568 1560 M400 1540 Q430 1568 500 1568 M130 1568 V1540 M240 1568 L265 1540 M300 1540 L320 1568"/>
        <circle cx="163" cy="177" r="32"/><circle cx="519" cy="210" r="24"/><circle cx="67" cy="138" r="24"/><circle cx="884" cy="347" r="33"/><circle cx="287" cy="461" r="25"/><circle cx="568" cy="587" r="25"/><circle cx="921" cy="539" r="33"/><circle cx="1136" cy="435" r="25"/><circle cx="1509" cy="569" r="25"/><circle cx="1207" cy="18" r="25"/><circle cx="1525" cy="50" r="25"/><circle cx="866" cy="1140" r="25"/><path d="M915 655 q20-50 45 0"/>
        <circle cx="45" cy="57" r="16"/><circle cx="686" cy="48" r="16"/><circle cx="1074" cy="35" r="16"/><circle cx="1302" cy="12" r="15"/><circle cx="401" cy="193" r="15"/><circle cx="432" cy="277" r="15"/><circle cx="352" cy="408" r="16"/><circle cx="686" cy="404" r="16"/><circle cx="56" cy="581" r="16"/><circle cx="199" cy="604" r="16"/><circle cx="145" cy="657" r="15"/><circle cx="379" cy="726" r="16"/><circle cx="1241" cy="419" r="16"/><circle cx="1307" cy="513" r="16"/><circle cx="320" cy="934" r="16"/><circle cx="289" cy="1124" r="16"/><circle cx="420" cy="1168" r="16"/><circle cx="1248" cy="1203" r="16"/><circle cx="1498" cy="1047" r="16"/><circle cx="1158" cy="1383" r="15"/><circle cx="1551" cy="1336" r="15"/>
      </g>
    </svg>

    <div class="msgs position-relative d-flex flex-column align-items-start">
      <div class="bubble bubble-out tail-out position-relative d-flex align-self-end">
        <span>dmna na</span><span class="stamp align-self-end">10.55</span><svg class="ticks align-self-end" width="48" height="31"><use href="#tk"/></svg>
        <svg class="tail position-absolute" width="22" height="29"><path d="M0 0 H18 Q24 1 20 7 L4 24 Q1 27 1 29 H0Z"/></svg>
      </div>
      <div class="bubble bubble-in tail-in gap-l position-relative d-flex">
        <span>lengkong kecil a</span><span class="stamp align-self-end">10.55</span>
        <svg class="tail position-absolute" width="22" height="29"><path d="M22 0 H4 Q-2 1 2 7 L18 24 Q21 27 21 29 H22Z"/></svg>
      </div>
      <div class="gap-s d-flex align-items-center">
        <div class="mapcard d-flex flex-column">
          <div class="mapimg">
            <svg width="762" height="417" viewBox="0 0 762 417">
              <defs>
                <filter id="soft" x="-5%" y="-5%" width="110%" height="110%"><feGaussianBlur stdDeviation="3.200"/></filter>
                <filter id="haze" x="-50%" y="-50%" width="200%" height="200%"><feGaussianBlur stdDeviation="12"/></filter>
                <linearGradient id="land" x1="0" y1="0" x2="0" y2="1"><stop offset="0" stop-color="#3d526b"/><stop offset=".7" stop-color="#3c526e"/><stop offset="1" stop-color="#40557a"/></linearGradient>
              </defs>
              <rect width="762" height="417" fill="url(#land)"/>
              <g filter="url(#haze)"><ellipse cx="475" cy="85" rx="45" ry="22" fill="#2b3d54"/><ellipse cx="470" cy="35" rx="32" ry="18" fill="#35606c"/><ellipse cx="170" cy="262" rx="170" ry="22" fill="#34475f"/><ellipse cx="620" cy="30" rx="140" ry="16" fill="#34475f"/><ellipse cx="200" cy="410" rx="70" ry="14" fill="#55626f"/></g>
              <g filter="url(#soft)" fill="none" stroke="#63758f" stroke-linejoin="round">
                <path stroke-width="22" d="M56 -5 L54 225 M-5 42 H50 M-5 163 L50 172"/>
                <path stroke-width="22" d="M68 116 H158 Q170 137 185 137 H208 Q222 135 236 116 H300 L620 168"/>
                <path stroke-width="23" d="M305 -5 L292 225"/>
                <path stroke-width="23" d="M628 25 L602 430 M635 110 L770 117 M635 196 L770 200 M355 270 L480 296 L610 323"/>
                <path stroke-width="34" d="M615 330 L672 340 L770 300 M665 335 L680 355"/>
                <path stroke-width="24" d="M678 345 V425"/>
                <path stroke-width="22" stroke="#5c6d85" d="M70 388 L190 412"/>
                <path stroke="#655c8b" stroke-width="8" d="M295 0 V40 M310 35 L322 62"/><path stroke="#2f6e70" stroke-width="9" d="M316 0 L328 45 M278 20 V60"/><path stroke="#5a4f7c" stroke-width="8" d="M448 60 L478 66"/>
              </g>
              <path d="M0 67 H762 M0 246 H762 M67 0 V417 M293 0 V417 M427 0 V417 M246 0 V417 M519 0 V417" stroke="#6a7f95" stroke-opacity=".25" stroke-width="1.500"/>
              <path d="M0 112 H762 M0 202 H762 M0 292 H762 M0 337 H762 M112 0 V417 M202 0 V417 M383 0 V417 M608 0 V417" stroke="#6a7f95" stroke-opacity=".12" stroke-width="1.500"/>
              <g filter="url(#soft)">
                <path d="M387 60 V223" stroke="#9eacc0" stroke-width="15"/><path d="M381 226 H392" stroke="#26374d" stroke-width="6"/>
                <ellipse cx="387" cy="15" rx="54" ry="48" fill="#fb3b36"/><ellipse cx="370" cy="0" rx="12" ry="4" fill="#ffb7b1"/>
              </g>
              <g filter="url(#soft)" font-family="Roboto, sans-serif" font-weight="700" font-size="53" fill="#a9b6ca" stroke="#34465e" stroke-width="7" paint-order="stroke">
                <text x="-14 22 66 104 151 190 217 252 298 333" y="272 255 255 255 257 259 264 270 275 279" rotate="-4 -2 0 1 3 4 5 6 8 16">JALAN JATI</text>
                <text x="443 490 526 567 614 664 714" y="4 10 14 18 22 27 32" rotate="5">ALEDANG</text>
                <text x="150 200 333" y="450 461 462" font-size="78" fill="#d8dfe8">fPl</text>
              </g>
              <text x="20" y="374" font-family="Lato, sans-serif" font-weight="700" font-size="53" fill="#fff" stroke="#1b2430" stroke-width="12" stroke-linejoin="round" paint-order="stroke" textLength="163" lengthAdjust="spacingAndGlyphs">Google</text>
            </svg>
          </div>
          <span class="stamp align-self-end">10.55</span>
        </div>
        <div class="fwd rounded-circle d-flex align-items-center justify-content-center">
          <svg width="60" height="42" viewBox="0 0 60 42" fill="none" stroke="#fff" stroke-width="6" stroke-linecap="round" stroke-linejoin="round"><path d="M3.500 38 V32 Q4 17 20 17 H42 M28 3.500 L42 17 L28 31.500 M43 3.500 L56.500 17 L43 31.500"/></svg>
        </div>
      </div>
      <div class="bubble bubble-out tail-out gap-m position-relative d-flex align-self-end">
        <span>cod ?</span><span class="stamp align-self-end">10.56</span><svg class="ticks align-self-end" width="48" height="31"><use href="#tk"/></svg>
        <svg class="tail position-absolute" width="22" height="29"><path d="M0 0 H18 Q24 1 20 7 L4 24 Q1 27 1 29 H0Z"/></svg>
      </div>
      <div class="bubble bubble-in tail-in gap-l position-relative d-flex">
        <span>aa yg kesini</span><span class="stamp align-self-end">10.56</span>
        <svg class="tail position-absolute" width="22" height="29"><path d="M22 0 H4 Q-2 1 2 7 L18 24 Q21 27 21 29 H22Z"/></svg>
      </div>
      <div class="bubble bubble-out tail-out gap-l position-relative d-flex align-self-end">
        <span>duh</span><span class="stamp align-self-end">10.57</span><svg class="ticks align-self-end" width="48" height="31"><use href="#tk"/></svg>
        <svg class="tail position-absolute" width="22" height="29"><path d="M0 0 H18 Q24 1 20 7 L4 24 Q1 27 1 29 H0Z"/></svg>
      </div>
      <div class="bubble bubble-out gap-s d-flex align-self-end">
        <span>up dlu</span><span class="stamp align-self-end">10.57</span><svg class="ticks align-self-end" width="48" height="31"><use href="#tk"/></svg>
      </div>
    </div>

    <div class="scroller position-absolute"></div>

    <div class="composer position-relative d-flex mt-auto">
      <div class="field d-flex align-items-center">
        <svg width="61" height="60" viewBox="0 0 61 60" fill="none" stroke="#8d9598" stroke-width="5.500" stroke-linejoin="round"><path d="M33 57 H20 Q3 57 3 40 V20 Q3 3 20 3 H41 Q58 3 58 20 V32 L33 57 V45 Q33 32 46 32 H58"/><circle cx="19.500" cy="20" r="4.500" fill="#8d9598" stroke="none"/><circle cx="41" cy="20" r="4.500" fill="#8d9598" stroke="none"/><path d="M17 34.500 H46 L34 41 Q20 43 17 34.500Z" fill="#8d9598" stroke="none"/></svg>
        <span class="hint">Ketik pesan</span>
        <svg class="ms-auto" width="39" height="61" viewBox="0 0 39 61" fill="none" stroke="#8d9598" stroke-width="5"><path d="M36.500 13 V40 A17 18 0 0 1 2.700 40 V15 A12 12 0 0 1 26.500 15 V38 A6.500 8 0 0 1 14 38 V14"/></svg>
        <svg style="margin-left:90px" width="61" height="54" viewBox="0 0 61 54" fill="none" stroke="#8d9598" stroke-width="5.500" stroke-linejoin="round"><path d="M3 9 H16 L22 3 H39 L45 9 H58 V51 H3Z"/><circle cx="30.500" cy="30" r="11"/></svg>
      </div>
      <div class="sendmic rounded-circle d-flex align-items-center justify-content-center">
        <svg width="42" height="58" viewBox="0 0 42 58"><rect x="11.500" y="0" width="19" height="37" rx="9.500" fill="#0b1014"/><path d="M2.500 29 A18.500 16 0 0 0 39.500 29 M21 45 V55" fill="none" stroke="#0b1014" stroke-width="5.500" stroke-linecap="round"/></svg>
      </div>
    </div>
  </section>

  <div class="kbbar d-flex align-items-center">
    <div class="kbapps rounded-circle d-flex align-items-center justify-content-center">
      <svg width="48" height="48" viewBox="0 0 48 48" fill="none" stroke="#b8b8b8" stroke-width="4.500"><rect x="2.250" y="2.250" width="16.500" height="16.500" rx="1"/><rect x="29.250" y="2.250" width="16.500" height="16.500" rx="1"/><rect x="2.250" y="29.250" width="16.500" height="16.500" rx="1"/><rect x="29.250" y="29.250" width="16.500" height="16.500" rx="1"/></svg>
    </div>
    <svg class="ms-auto" width="51" height="56" viewBox="0 0 51 56" fill="none" stroke="#b8b8b8" stroke-width="4.500"><path d="M14 8 H10 Q2.500 8 2.500 15 V46 Q2.500 53.500 10 53.500 H41 Q48.500 53.500 48.500 46 V15 Q48.500 8 41 8 H37"/><path d="M10.500 15.500 H40.500 M16 14 L19 2.500 H32 L35 14 M13 28 H35 M13 38 H28"/></svg>
    <svg style="margin-left:124px" width="53" height="54" viewBox="0 0 53 54" fill="none" stroke="#b8b8b8" stroke-width="4.500"><rect x="14.500" y="2.300" width="24" height="40" rx="12"/><path d="M2.300 29.500 A24.200 22 0 0 0 50.700 29.500"/></svg>
    <svg style="margin-left:125px" width="50" height="50" viewBox="0 0 50 50" fill="none" stroke="#b8b8b8" stroke-width="4.500"><circle cx="22.500" cy="22.500" r="20.300"/><path d="M37 37 L48.500 48.500"/></svg>
  </div>

  <section class="keyboard">
    <div class="krow d-flex justify-content-center">
      <div class="key"><span class="alt">1</span>q</div><div class="key"><span class="alt">2</span>w</div><div class="key"><span class="alt">3</span>e</div><div class="key"><span class="alt">4</span>r</div><div class="key"><span class="alt">5</span>t</div><div class="key"><span class="alt">6</span>y</div><div class="key"><span class="alt">7</span>u</div><div class="key"><span class="alt">8</span>i</div><div class="key"><span class="alt">9</span>o</div><div class="key"><span class="alt">0</span>p</div>
    </div>
    <div class="krow d-flex justify-content-center">
      <div class="key"><span class="alt">@</span>a</div><div class="key"><span class="alt">#</span>s</div><div class="key"><span class="alt">$</span>d</div><div class="key"><span class="alt">_</span>f</div><div class="key"><span class="alt">&amp;</span>g</div><div class="key"><span class="alt">-</span>h</div><div class="key"><span class="alt">+</span>j</div><div class="key"><span class="alt">(</span>k</div><div class="key"><span class="alt">)</span>l</div>
    </div>
    <div class="krow d-flex justify-content-between">
      <div class="key dim wide-mod d-flex align-items-center justify-content-center pt-1"><svg width="54" height="55" viewBox="0 0 54 55" fill="none" stroke="#efefef" stroke-width="4.600" stroke-linejoin="round"><path d="M27 3 L51 28.500 H39.500 V52 H15 V28.500 H3Z"/></svg></div>
      <div class="d-flex key-gap"><div class="key"><span class="alt">*</span>z</div><div class="key"><span class="alt">"</span>x</div><div class="key"><span class="alt">'</span>c</div><div class="key"><span class="alt">:</span>v</div><div class="key"><span class="alt">;</span>b</div><div class="key"><span class="alt">!</span>n</div><div class="key"><span class="alt">?</span>m</div></div>
      <div class="key dim wide-mod d-flex align-items-center justify-content-center pt-1"><svg width="63" height="48" viewBox="0 0 63 48" fill="none" stroke="#efefef" stroke-width="4.800" stroke-linejoin="round"><path d="M19 2.500 H57 Q60 2.500 60 5.500 V42 Q60 45.500 57 45.500 H19 L3 24Z M27.500 15 L46.500 33 M46.500 15 L27.500 33"/></svg></div>
    </div>
    <div class="krow mod-row d-flex">
      <div class="key dim sym">?123</div>
      <div class="key dim slim d-flex align-items-center justify-content-center pt-1"><svg width="56" height="56" viewBox="0 0 56 56" fill="none" stroke="#efefef" stroke-width="4.800" stroke-linecap="round"><circle cx="28" cy="28" r="25.600"/><path d="M15.500 35 Q28 48 40.500 35"/><circle cx="17.500" cy="22" r="4" fill="#efefef" stroke="none"/><circle cx="38.500" cy="22" r="4" fill="#efefef" stroke="none"/></svg></div>
      <div class="key dim slim"><svg class="position-absolute" style="top:9px;right:11px" width="29" height="30" viewBox="0 0 29 30" fill="none" stroke="#6c6c6c" stroke-width="3"><rect x="8" y="1.500" width="13" height="20" rx="6.500"/><path d="M1.500 15 A13 12 0 0 0 27.500 15"/></svg>,</div>
      <div class="key space">
        <svg class="position-absolute" style="top:9px;right:9px" width="37" height="37" viewBox="0 0 37 37" fill="none" stroke="#9f9f9f" stroke-width="2.600"><circle cx="18.500" cy="18.500" r="17"/><ellipse cx="18.500" cy="18.500" rx="8.500" ry="17"/><path d="M2.500 13 H34.500 M2.500 24 H34.500"/></svg>
        <span class="d-flex align-items-center justify-content-between" style="padding:0 22px"><svg width="16" height="27" viewBox="0 0 16 27" fill="#8d8d8d"><path d="M0 13.500 L15.500 0 V27Z"/></svg><span>Bahasa Indonesia</span><svg width="16" height="27" viewBox="0 0 16 27" fill="#8d8d8d"><path d="M16 13.500 L.5 0 V27Z"/></svg></span>
      </div>
      <div class="key dim slim"><span class="alt">!?</span>.</div>
      <div class="key dim enterkey d-flex align-items-center justify-content-center pt-1"><svg width="55" height="34" viewBox="0 0 55 34" fill="none" stroke="#92abdb" stroke-width="5"><path d="M52 0 V14 Q52 17.500 48.500 17.500 H4 M19 1.500 L3.500 17.500 L19 32.500"/></svg></div>
    </div>
    <div class="navstrip"><svg width="50" height="42" viewBox="0 0 50 42" fill="#fff" stroke="#fff" stroke-width="4" stroke-linejoin="round"><path d="M2.500 2.500 H47.500 L25 39Z"/></svg></div>
    <div class="homebar"></div>
  </section>
</main>
<script src="https://cdn.jsdelivr.net/npm/bootstrap@5.3.0/dist/js/bootstrap.bundle.min.js"></script>
</body>
</html>
